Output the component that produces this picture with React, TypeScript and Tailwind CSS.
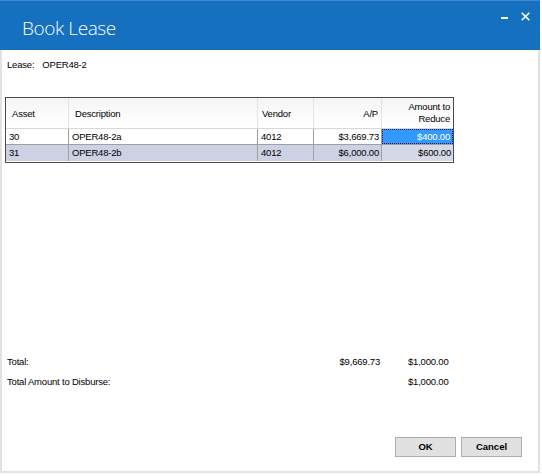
import React from "react";

const font = { fontFamily: '"Liberation Sans", Arial, sans-serif' };

export default function App() {
  return (
    <div className="w-[542px] h-[476px] bg-white relative overflow-hidden" style={font}>
      <div className="w-[540px] h-[473px] flex flex-col border-l-2 border-r-2 border-b-2 border-[#e2e2e2] box-border">
        {/* Title bar */}
        <div className="h-[50px] -ml-[2px] -mr-[2px] bg-[#1571bf] border-t border-[#3f8ad0] flex items-start relative shrink-0">
          <div
            className="ml-[22px] mt-[15px] text-[19px] leading-[24px] font-light text-white tracking-[-0.4px]"
            style={{ fontFamily: '"Open Sans", "Noto Sans", sans-serif' }}
          >
            Book Lease
          </div>
          <div className="absolute left-[501px] top-[16px] w-[7px] h-[2px] bg-white" />
          <svg className="absolute left-[521px] top-[11px]" width="9" height="9" viewBox="0 0 9 9">
            <path d="M0.7 0.7 L8.3 8.3 M8.3 0.7 L0.7 8.3" stroke="white" strokeWidth="1.6" />
          </svg>
        </div>

        {/* Lease row */}
        <div className="h-[47px] shrink-0 pl-[5px] pt-[9px] text-[9.5px] leading-[11px] tracking-[-0.2px] text-black flex">
          <span>Lease:</span>
          <span className="ml-[8px]">OPER48-2</span>
        </div>

        {/* Table */}
        <div className="ml-[3px] w-[449px] h-[66px] border border-[#4a4a4a] bg-white text-[9.5px] tracking-[-0.2px] text-black shrink-0 flex flex-col">
          <div className="h-[31px] grid grid-cols-[63px_189px_56px_68px_71px] bg-gradient-to-b from-[#f4f4f4] via-[#fbfbfb] to-white border-b border-[#d8d8d8]">
            <div className="border-r border-[#e4e4e4] pl-[6px] flex items-center leading-[11px]">Asset</div>
            <div className="border-r border-[#e4e4e4] pl-[6px] flex items-center leading-[11px]">Description</div>
            <div className="border-r border-[#e4e4e4] pl-[4px] flex items-center leading-[11px]">Vendor</div>
            <div className="border-r border-[#e4e4e4] pr-[3px] flex items-center justify-end leading-[11px]">A/P</div>
            <div className="pr-[3px] flex flex-col items-end justify-center leading-[12px]">
              <span>Amount to</span>
              <span>Reduce</span>
            </div>
          </div>
          <div className="h-[16px] grid grid-cols-[63px_189px_56px_68px_71px] border-b border-[#a0a0a0] bg-white leading-[15px]">
            <div className="border-r border-[#a0a0a0] pl-[3px]">30</div>
            <div className="border-r border-[#a0a0a0] pl-[3px]">OPER48-2a</div>
            <div className="border-r border-[#a0a0a0] pl-[3px]">4012</div>
            <div className="border-r border-[#a0a0a0] pr-[2px] text-right">$3,669.73</div>
            <div className="bg-[#3399ff] text-white text-right pr-[2px] border border-dotted border-[#1a1a4a] leading-[13px]">$400.00</div>
          </div>
          <div className="h-[16px] grid grid-cols-[63px_189px_56px_68px_71px] bg-[#cdd1e4] leading-[15px]">
            <div className="border-r border-[#a0a0a0] pl-[3px]">31</div>
            <div className="border-r border-[#a0a0a0] pl-[3px]">OPER48-2b</div>
            <div className="border-r border-[#a0a0a0] pl-[3px]">4012</div>
            <div className="border-r border-[#a0a0a0] pr-[2px] text-right">$6,000.00</div>
            <div className="pr-[2px] text-right bg-[#d5d8e7]">$600.00</div>
          </div>
        </div>

        {/* Totals */}
        <div className="mt-[193px] pl-[5px] text-[9.5px] tracking-[-0.2px] text-black shrink-0">
          <div className="h-[12px] leading-[12px] flex">
            <span className="w-[373px]">Total:</span>
            <span className="w-[0px] flex justify-end whitespace-nowrap">$9,669.73</span>
            <span className="ml-[28px]">$1,000.00</span>
          </div>
          <div className="h-[12px] leading-[12px] mt-[8px] flex">
            <span className="w-[401px]">Total Amount to Disburse:</span>
            <span>$1,000.00</span>
          </div>
        </div>

        {/* Buttons */}
        <div className="mt-[49px] flex gap-[5px] pl-[393px] shrink-0">
          <button className="w-[61px] h-[20px] bg-[#e1e1e1] border border-[#adadad] text-[9.5px] font-bold text-black leading-[18px]">
            OK
          </button>
          <button className="w-[61px] h-[20px] bg-[#e1e1e1] border border-[#adadad] text-[9.5px] font-bold text-black leading-[18px]">
            Cancel
          </button>
        </div>
      </div>
    </div>
  );
}
